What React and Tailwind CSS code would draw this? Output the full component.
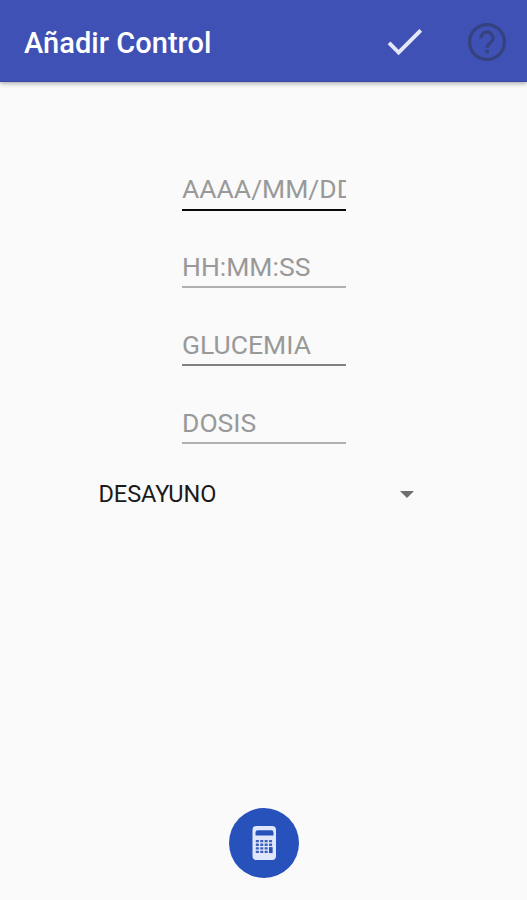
import { useState } from 'react'

const fields = [
  { key: 'fecha', hint: 'AAAA/MM/DD', line: 'h-[2px] mt-[4px] bg-[#080808]' },
  { key: 'hora', hint: 'HH:MM:SS', line: 'h-[2px] mt-[3px] bg-[#b0b0b0]' },
  { key: 'glucemia', hint: 'GLUCEMIA', line: 'h-[2px] mt-[3px] bg-[#808080]' },
  { key: 'dosis', hint: 'DOSIS', line: 'h-[2px] mt-[3px] bg-[#b0b0b0]' },
]

export default function App() {
  const [form, setForm] = useState({ fecha: '', hora: '', glucemia: '', dosis: '' })

  return (
    <div className="h-[900px] w-[527px] overflow-hidden bg-[#fafafa] font-[Roboto,sans-serif] flex flex-col">
      <Header />

      <main className="flex-1 flex flex-col items-center pt-[91px]">
        <form className="w-[164px] flex flex-col">
          {fields.map((f) => (
            <Field
              key={f.key}
              hint={f.hint}
              line={f.line}
              value={form[f.key]}
              onChange={(v) => setForm({ ...form, [f.key]: v })}
            />
          ))}
        </form>

        <button type="button" className="w-[330px] h-8 -mt-[7px] flex items-center justify-between pr-[15px]">
          <span className="text-[23.5px] leading-8 tracking-[-0.05px] text-[#1a1a1a]">DESAYUNO</span>
          <svg className="mt-px" width="14" height="7" viewBox="0 0 14 7" fill="#6f6f6f">
            <path d="M0 0h14L7 7z" />
          </svg>
        </button>

        <button
          type="button"
          aria-label="Calculadora"
          className="mt-auto mb-[22px] ml-px size-[70px] rounded-full bg-[#2852bb] flex items-center justify-center"
        >
          <CalculatorIcon />
        </button>
      </main>
    </div>
  )
}

function Header() {
  return (
    <header className="h-[82px] shrink-0 flex items-center pl-6 pr-[17px] bg-[#3f51b5] border-b border-[#3a4a9f] shadow-[0_1px_5px_rgba(0,0,0,0.4)]">
      <h1 className="flex-1 pt-1 text-[29px] leading-9 font-medium tracking-[0.04px] text-white">Añadir Control</h1>
      <button type="button" aria-label="Guardar" className="mr-9 pt-[2px]">
        <svg width="47" height="47" viewBox="0 0 24 24" fill="#e4e7f6">
          <path d="M9 16.17 4.83 12l-1.42 1.41L9 19 21 7l-1.41-1.41z" />
        </svg>
      </button>
      <button type="button" aria-label="Ayuda" className="pt-[2px]">
        <svg width="46" height="46" viewBox="0 0 24 24" fill="none" stroke="#36427f" strokeWidth="1.75">
          <circle cx="12" cy="12" r="9.1" />
          <path d="M8.8 10a3.2 3.2 0 0 1 6.4 0c0 2.3-3.1 2.5-3.1 5" />
          <path d="M12.1 16.1v1.8" />
        </svg>
      </button>
    </header>
  )
}

function Field({ hint, line, value, onChange }) {
  return (
    <label className="block h-[77.9px]">
      <input
        type="text"
        value={value}
        placeholder={hint}
        onChange={(e) => onChange(e.target.value)}
        className="block w-full h-8 pl-[0.5px] text-[26.5px] leading-8 text-black placeholder:text-[#999999] outline-none"
      />
      <div className={line} />
    </label>
  )
}

function CalculatorIcon() {
  const rows = [14, 17.6, 21.2, 24.8]
  const cols = [3.8, 8.2, 12.6, 17]

  return (
    <svg width="24" height="34" viewBox="0 0 24 34">
      <rect x="0.5" y="0" width="23.5" height="34" rx="4" fill="#e0e7fa" />
      <path d="M3.5 9.5V6.5a2.3 2.3 0 0 1 2.3-2.3h13.4a2.3 2.3 0 0 1 2.3 2.3v3z" fill="#2852bb" />
      {rows.map((y) => cols.map((x) => (
        <rect key={`${x}-${y}`} x={x} y={y} width="3.1" height="2.3" rx="0.3" fill="#3f5fb9" />
      )))}
      <rect x="17" y="21.2" width="3.6" height="5.9" fill="#2852bb" />
    </svg>
  )
}
